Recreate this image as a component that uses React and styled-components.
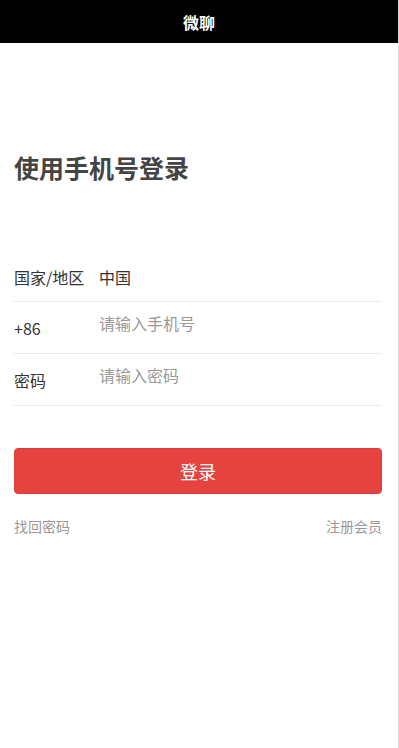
import React from "react";
import styled, { createGlobalStyle } from "styled-components";

const GlobalStyle = createGlobalStyle`
  html, body {
    margin: 0;
    padding: 0;
    background: #fff;
  }
  body {
    font-family: "Noto Sans CJK SC", "Noto Sans", sans-serif;
    color: #333;
  }
  * {
    box-sizing: border-box;
  }
`;

const Page = styled.div`
  width: 399px;
  min-height: 748px;
  border-right: 1px solid #dcdcdc;
  background: #fff;
`;

const Header = styled.header`
  height: 43px;
  background: #000;
  color: #fff;
  display: flex;
  align-items: center;
  justify-content: center;
  font-size: 16px;
  font-weight: bold;
`;

const Main = styled.main`
  padding: 0 16px 0 14px;
`;

const Title = styled.h1`
  margin: 0;
  padding-top: 104px;
  height: 207px;
  font-size: 25px;
  line-height: 40px;
  font-weight: bold;
  color: #444;
`;

const Form = styled.form`
  display: flex;
  flex-direction: column;
`;

const Row = styled.label`
  display: flex;
  align-items: flex-start;
  height: 52px;
  border-bottom: 1px solid #ececec;
  font-size: 16px;
`;

const Label = styled.span`
  width: 85px;
  flex-shrink: 0;
  padding-top: ${(p) => (p.$first ? "16px" : "15px")};
  line-height: 22px;
  color: #333;
`;

const Value = styled.span`
  padding-top: 16px;
  line-height: 22px;
  color: #333;
`;

const Input = styled.input`
  flex: 1;
  margin-top: 10px;
  height: 22px;
  padding: 0;
  border: none;
  outline: none;
  background: transparent;
  font-family: inherit;
  font-size: 16px;
  line-height: 22px;
  color: #333;

  &::placeholder {
    color: #999;
  }
`;

const Submit = styled.button`
  margin-top: 42px;
  height: 46px;
  width: 100%;
  border: 1px solid #d9403d;
  border-radius: 4px;
  background: #e64340;
  color: #fff;
  font-family: inherit;
  font-size: 18px;
  cursor: pointer;
`;

const Links = styled.div`
  display: flex;
  justify-content: space-between;
  margin-top: 22px;
  font-size: 14px;
  line-height: 20px;
`;

const LinkText = styled.a`
  color: #999;
  text-decoration: none;
`;

export default function App() {
  return (
    <>
      <GlobalStyle />
      <Page>
        <Header>微聊</Header>
        <Main>
          <Title>使用手机号登录</Title>
          <Form onSubmit={(e) => e.preventDefault()}>
            <Row>
              <Label $first>国家/地区</Label>
              <Value>中国</Value>
            </Row>
            <Row>
              <Label>+86</Label>
              <Input type="tel" placeholder="请输入手机号" />
            </Row>
            <Row>
              <Label>密码</Label>
              <Input type="password" placeholder="请输入密码" autoFocus />
            </Row>
            <Submit type="submit">登录</Submit>
          </Form>
          <Links>
            <LinkText href="#">找回密码</LinkText>
            <LinkText href="#">注册会员</LinkText>
          </Links>
        </Main>
      </Page>
    </>
  );
}
